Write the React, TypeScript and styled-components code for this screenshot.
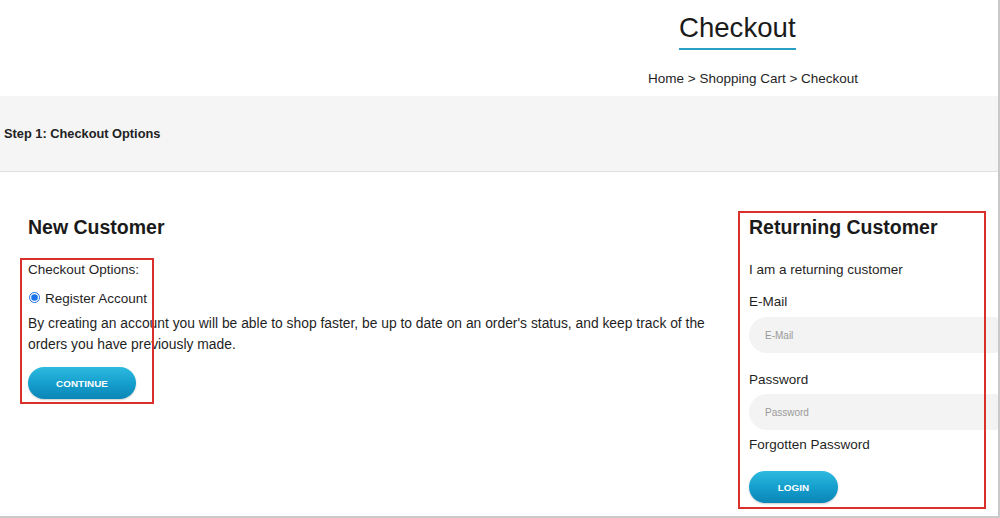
import React from "react";
import styled, { createGlobalStyle } from "styled-components";

const Global = createGlobalStyle`
  html, body { margin: 0; padding: 0; background: #fff; overflow: hidden; }
  body { font-family: "Liberation Sans", Arial, Helvetica, sans-serif; color: #1f1f1f; }
  * { box-sizing: border-box; }
`;

const Frame = styled.div`
  width: 1000px;
  height: 518px;
  border-right: 2px solid #c9c9c9;
  border-bottom: 2px solid #c9c9c9;
  overflow: hidden;
  background: #fff;
`;

const Header = styled.header`
  height: 96px;
  display: flex;
  flex-direction: column;
  align-items: flex-start;
  padding-left: 648px;
`;

const Title = styled.h1`
  margin: 0 0 0 31px;
  padding-top: 11px;
  padding-bottom: 3px;
  font-size: 27.6px;
  line-height: 34px;
  font-weight: 400;
  color: #1a1a1a;
  border-bottom: 2px solid #2a9fc4;
`;

const Breadcrumb = styled.nav`
  margin-top: 19px;
  font-size: 13.5px;
  line-height: 20px;
  color: #1f1f1f;
`;

const StepBar = styled.div`
  height: 76px;
  background: #f5f5f5;
  border-bottom: 1px solid #e0e0e0;
  display: flex;
  align-items: center;
  padding-left: 4px;
  font-size: 12.8px;
  font-weight: 700;
  color: #222;
`;

const Main = styled.main`
  display: flex;
  padding-left: 28px;
`;

const Column = styled.section<{ $width: number; $gap?: number }>`
  position: relative;
  flex: none;
  width: ${(p) => p.$width}px;
  margin-left: ${(p) => p.$gap ?? 0}px;
  display: flex;
  flex-direction: column;
  align-items: flex-start;
`;

const Heading = styled.h2`
  margin: 43px 0 0;
  font-size: 19.5px;
  line-height: 24px;
  font-weight: 700;
  color: #1a1a1a;
`;

const Text = styled.p<{ $top: number }>`
  margin: ${(p) => p.$top}px 0 0;
  font-size: 13.5px;
  line-height: 20px;
  color: #1f1f1f;
`;

const Paragraph = styled.p`
  margin: 4px 0 0;
  font-size: 13.85px;
  line-height: 21px;
  color: #1f1f1f;
  max-width: 700px;
`;

const RadioRow = styled.label`
  margin-top: 9px;
  display: flex;
  align-items: center;
  gap: 5px;
  font-size: 13.5px;
  line-height: 20px;
`;

const Radio = styled.input`
  margin: -4px 0 0 1px;
  width: 11px;
  height: 11px;
  accent-color: #1a73e8;
`;

const PillButton = styled.button<{ $width: number; $top: number }>`
  margin-top: ${(p) => p.$top}px;
  width: ${(p) => p.$width}px;
  height: 32px;
  border: none;
  border-radius: 16px;
  background: linear-gradient(180deg, #2cbbe0 0%, #149ccb 55%, #0b86b6 100%);
  box-shadow: 0 1px 2px rgba(0, 0, 0, 0.2);
  color: #fff;
  font-family: "Liberation Sans", Arial, sans-serif;
  font-size: 9.8px;
  font-weight: 700;
  letter-spacing: 0.1px;
  cursor: pointer;
`;

const Field = styled.input<{ $top: number }>`
  margin-top: ${(p) => p.$top}px;
  width: 262px;
  height: 36px;
  border: none;
  border-radius: 18px;
  background: #f3f3f3;
  padding-left: 16px;
  font-family: "Liberation Sans", Arial, sans-serif;
  font-size: 10px;
  color: #333;
  outline: none;
  &::placeholder { color: #9a9a9a; }
`;

const Annotation = styled.div<{ $l: number; $t: number; $w: number; $h: number }>`
  position: absolute;
  left: ${(p) => p.$l}px;
  top: ${(p) => p.$t}px;
  width: ${(p) => p.$w}px;
  height: ${(p) => p.$h}px;
  border: 2px solid #d9302c;
  pointer-events: none;
`;

export default function App() {
  return (
    <>
      <Global />
      <Frame>
        <Header>
          <Title>Checkout</Title>
          <Breadcrumb>Home &gt; Shopping Cart &gt; Checkout</Breadcrumb>
        </Header>
        <StepBar>Step 1: Checkout Options</StepBar>
        <Main>
          <Column $width={700}>
            <Heading>New Customer</Heading>
            <Text $top={21}>Checkout Options:</Text>
            <RadioRow>
              <Radio type="radio" name="account" defaultChecked />
              Register Account
            </RadioRow>
            <Paragraph>
              By creating an account you will be able to shop faster, be up to date on an order's status, and keep track of the orders you have previously made.
            </Paragraph>
            <PillButton $width={108} $top={12}>CONTINUE</PillButton>
            <Annotation $l={-8} $t={86} $w={134} $h={146} />
          </Column>
          <Column $width={262} $gap={21}>
            <Heading>Returning Customer</Heading>
            <Text $top={21}>I am a returning customer</Text>
            <Text $top={12}>E-Mail</Text>
            <Field $top={5} placeholder="E-Mail" />
            <Text $top={17}>Password</Text>
            <Field $top={4} type="password" placeholder="Password" />
            <Text $top={5}>Forgotten Password</Text>
            <PillButton $width={89} $top={16}>LOGIN</PillButton>
            <Annotation $l={-11} $t={39} $w={248} $h={298} />
          </Column>
        </Main>
      </Frame>
    </>
  );
}
